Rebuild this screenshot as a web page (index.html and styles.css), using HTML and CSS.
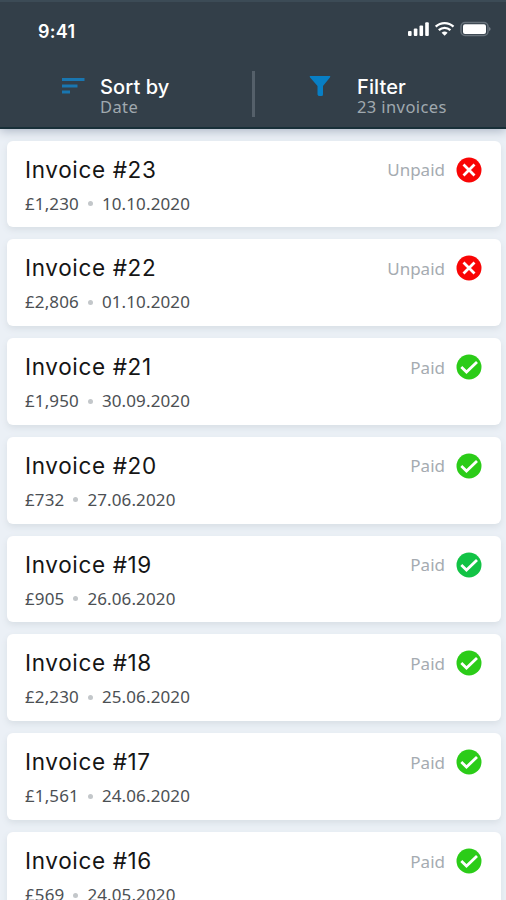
FILE: index.html
```html
<!DOCTYPE html>
<html lang="en">
<head>
<meta charset="utf-8">
<title>Invoices</title>
<link rel="stylesheet" href="styles.css">
</head>
<body>
<svg class="defs" width="0" height="0">
  <symbol id="paid" viewBox="0 0 26 26"><circle cx="13" cy="13" r="12.5" fill="currentColor"/><path d="M5.300 13l5.200 5L21 8" fill="none" stroke="#fff" stroke-width="2.8"/></symbol>
  <symbol id="unpaid" viewBox="0 0 26 26"><circle cx="13" cy="13" r="12.5" fill="currentColor"/><path d="M7.500 7.500l11 11M18.500 7.500l-11 11" fill="none" stroke="#fff" stroke-width="2.8"/></symbol>
</svg>
<header class="header">
  <div class="status">
    <span class="time">9:41</span>
    <svg class="system" width="84" height="18" viewBox="0 0 84 18" fill="#fff">
      <rect x="1" y="11" width="3.6" height="5" rx="1"/><rect x="6.8" y="8.6" width="3.6" height="7.4" rx="1"/><rect x="12.5" y="5.5" width="3.6" height="10.5" rx="1"/><rect x="18.2" y="2.2" width="3.6" height="13.8" rx="1"/>
      <g fill="none" stroke="#fff" stroke-width="2.3"><path d="M28.7 6.7c5.2-4.8 12.6-4.8 17.8 0"/><path d="M31.8 10.2c3.4-3.1 8.2-3.1 11.6 0"/></g><path d="M34.6 12.7c1.8-1.5 4.2-1.5 6 0l-3 3.1z"/>
      <rect x="54" y="2.5" width="27" height="13" rx="4" fill="none" stroke="#68727b" stroke-width="1.5"/><rect x="56" y="4.3" width="23" height="9.6" rx="2"/><path d="M82.2 7v4c1.8-.7 1.8-3.3 0-4z" fill="#7f8890"/>
    </svg>
  </div>
  <div class="tools">
    <div class="tool sort">
      <svg class="tool-icon" width="24" height="24" viewBox="0 0 24 24" fill="#1976b0"><path d="M1 4h22.5v3H1zM1 10.5h15.5v3H1zM1 16.5h8v3H1z"/></svg>
      <div><div class="label">Sort by</div><div class="value">Date</div></div>
    </div>
    <div class="divider"></div>
    <div class="tool filter">
      <svg class="tool-icon" width="24" height="24" viewBox="0 0 24 24" fill="#087fc5"><path d="M1.8 2h20.4q.2 1-.5 1.8L15 12v8.5q0 1.5-1.5 1.5h-2Q10 22 9.500 20.500V12L2.300 3.800Q1.600 3 1.800 2z"/></svg>
      <div><div class="label">Filter</div><div class="value">23 invoices</div></div>
    </div>
  </div>
</header>
<main class="list">
  <article class="card"><div><h2 class="title">Invoice #23</h2><p class="meta">£1,230<i class="dot"></i>10.10.2020</p></div><div class="state">Unpaid<svg class="badge unpaid"><use href="#unpaid"/></svg></div></article>
  <article class="card"><div><h2 class="title">Invoice #22</h2><p class="meta">£2,806<i class="dot"></i>01.10.2020</p></div><div class="state">Unpaid<svg class="badge unpaid"><use href="#unpaid"/></svg></div></article>
  <article class="card"><div><h2 class="title">Invoice #21</h2><p class="meta">£1,950<i class="dot"></i>30.09.2020</p></div><div class="state">Paid<svg class="badge"><use href="#paid"/></svg></div></article>
  <article class="card"><div><h2 class="title">Invoice #20</h2><p class="meta">£732<i class="dot"></i>27.06.2020</p></div><div class="state">Paid<svg class="badge"><use href="#paid"/></svg></div></article>
  <article class="card"><div><h2 class="title">Invoice #19</h2><p class="meta">£905<i class="dot"></i>26.06.2020</p></div><div class="state">Paid<svg class="badge emerald"><use href="#paid"/></svg></div></article>
  <article class="card"><div><h2 class="title">Invoice #18</h2><p class="meta">£2,230<i class="dot"></i>25.06.2020</p></div><div class="state">Paid<svg class="badge"><use href="#paid"/></svg></div></article>
  <article class="card"><div><h2 class="title">Invoice #17</h2><p class="meta">£1,561<i class="dot"></i>24.06.2020</p></div><div class="state">Paid<svg class="badge"><use href="#paid"/></svg></div></article>
  <article class="card"><div><h2 class="title">Invoice #16</h2><p class="meta">£569<i class="dot"></i>24.05.2020</p></div><div class="state">Paid<svg class="badge"><use href="#paid"/></svg></div></article>
</main>
</body>
</html>
```
FILE: styles.css
```css
* { box-sizing: border-box; }
body { margin: 0; height: 900px; overflow: hidden; background: #ebf0f6; font-family: "Noto Sans", sans-serif; display: flex; flex-direction: column; }
.defs { display: none; }
.header { flex: none; height: 129px; background: #333f49; border-top: 2px solid #3c4b56; border-bottom: 2px solid #182f38; box-shadow: 0 2px 10px #aab4c3; }
.status { height: 67px; padding: 18px 15px 0 38px; display: flex; justify-content: space-between; }
.time { font: 600 18px/24px Inter, sans-serif; letter-spacing: .3px; color: #fff; }
.system { margin-top: 0; }
.tools { display: flex; height: 58px; }
.tool { display: flex; padding-top: 7px; }
.sort { width: 252px; padding-left: 61px; gap: 15px; }
.filter { padding-left: 53px; gap: 25px; }
.tool-icon { flex: none; margin-top: -2px; }
.divider { width: 3px; height: 46px; margin-top: 2px; background: #55606a; }
.label { font: 500 20px/22px Inter, sans-serif; letter-spacing: .1px; color: #fff; }
.value { font-size: 16.5px; line-height: 18px; letter-spacing: .4px; color: #a0a9af; }
.list { flex: none; padding: 11.500px 5px 0 7px; display: flex; flex-direction: column; gap: 12px; }
.card { height: 86.8px; flex: none; border-radius: 6px; background: #fff; box-shadow: 0 3px 6px #d8dfe5; padding: 14px 19px 0 18px; display: flex; justify-content: space-between; }
.title { margin: 0; font: 400 22.5px/30px Inter, sans-serif; letter-spacing: .65px; color: #151515; }
.meta { margin: 7px 0 0; font-size: 17px; line-height: 24px; letter-spacing: .12px; color: #4c5054; display: flex; align-items: center; }
.dot { width: 5px; height: 5px; border-radius: 50%; background: #c3c7ca; margin: 0 9px; }
.state { height: 30px; display: flex; align-items: center; gap: 11px; font-size: 17px; color: #a5abb1; }
.badge { width: 26px; height: 26px; color: #2bcc18; }
.unpaid { color: #f90505; }
.emerald { color: #12c345; }
```
